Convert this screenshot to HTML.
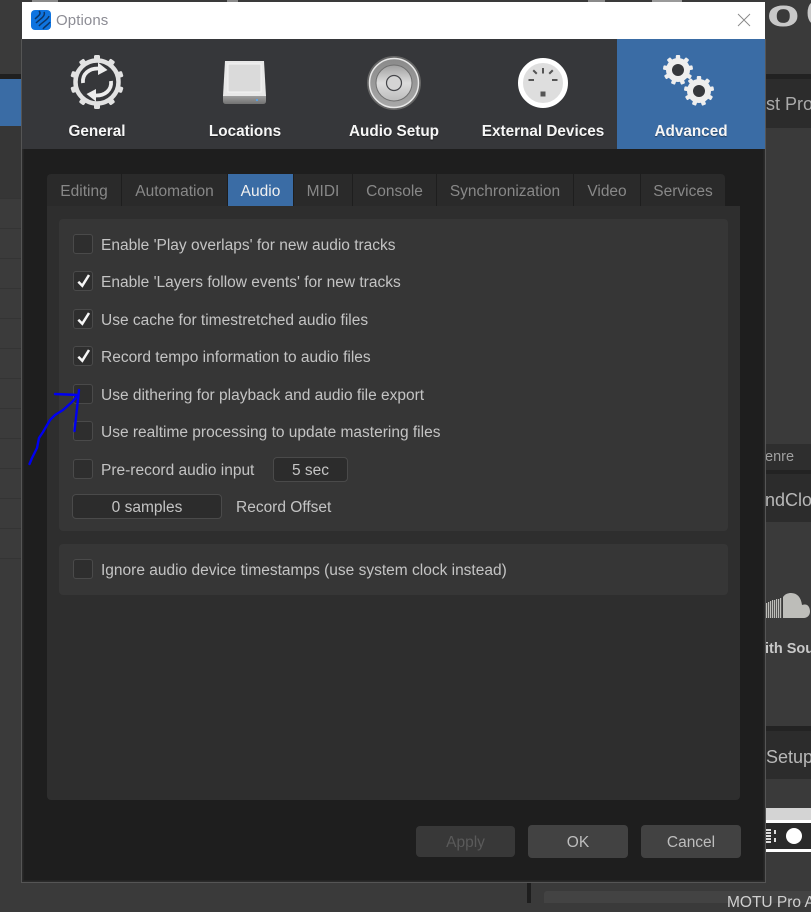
<!DOCTYPE html>
<html><head><meta charset="utf-8">
<style>
*{box-sizing:border-box}
html,body{margin:0;padding:0;width:811px;height:903px;overflow:hidden;background:#3a3a3a;font-family:"Liberation Sans",sans-serif}
.a{position:absolute}
.t{position:absolute;white-space:nowrap}
.lbl{font-size:15.5px;color:#c4c4c4;line-height:18px;margin-top:1px}
.cb{position:absolute;left:73px;width:20px;height:20px;border:1px solid #4a4a4a;border-radius:3px;background:#2e2e2e}
.tab{position:absolute;top:174px;height:32px;background:#2a2a2a;color:#888;font-size:15.5px;line-height:35px;text-align:center}
.hd{position:absolute;top:123px;font-size:15.3px;font-weight:bold;color:#f6f6f6;text-align:center;line-height:18px;width:148px;text-shadow:0 1px 1px rgba(0,0,0,.45)}
.fld{position:absolute;height:25px;background:#2c2c2c;border:1px solid #4a4a4a;border-radius:4px;color:#c4c4c4;font-size:15.5px;line-height:25px;text-align:center}
.btn{position:absolute;top:825px;height:33px;background:#424242;border-radius:4px;color:#bdbdbd;font-size:15.5px;line-height:35px;text-align:center}
</style></head><body>

<!-- background app -->
<div class="a" style="left:0;top:0;width:811px;height:74px;background:#3a3a3a"></div>
<div class="a" style="left:32px;top:0;width:26px;height:2px;background:#8a8a8a"></div>
<div class="a" style="left:227px;top:0;width:11px;height:2px;background:#8a8a8a"></div>
<div class="a" style="left:588px;top:0;width:17px;height:2px;background:#8a8a8a"></div>
<div class="a" style="left:652px;top:0;width:30px;height:2px;background:#9a9a9a"></div>
<div class="a" style="left:0;top:74px;width:22px;height:5px;background:#1f1f1f"></div>
<div class="a" style="left:0;top:79px;width:22px;height:47px;background:#3a6ca5"></div>
<div class="a" style="left:0;top:126px;width:22px;height:72px;background:#363636"></div>
<div class="a" style="left:0;top:198px;width:22px;height:361px;background:repeating-linear-gradient(#343434 0,#343434 1px,#3b3b3b 1px,#3b3b3b 30px)"></div>
<div class="a" style="left:765px;top:74px;width:46px;height:5px;background:#222"></div>
<div class="a" style="left:765px;top:79px;width:46px;height:49px;background:#2c2c2c"></div>
<div class="t" style="left:766px;top:93px;font-size:18px;color:#aaa;line-height:22px;width:45px;overflow:hidden">st Pro</div>
<div class="t" style="left:767px;top:-5px;font-size:38px;font-weight:bold;color:#c8c8c8;line-height:38px;transform:scaleX(1.4);transform-origin:0 0">o</div>
<div class="t" style="left:806px;top:-5px;font-size:38px;font-weight:bold;color:#c8c8c8;line-height:38px">C</div>
<div class="a" style="left:765px;top:444px;width:46px;height:26px;background:#2e2e2e"></div>
<div class="t" style="left:765px;top:448px;font-size:14.5px;color:#a0a0a0;line-height:18px">enre</div>
<div class="a" style="left:765px;top:470px;width:46px;height:4px;background:#232323"></div>
<div class="a" style="left:765px;top:474px;width:46px;height:48px;background:#2c2c2c"></div>
<div class="t" style="left:765px;top:489px;width:46px;overflow:hidden;font-size:18px;color:#b8b8b8;line-height:22px">ndCloud</div>
<svg class="a" style="left:765px;top:592px" width="46" height="28" viewBox="0 0 46 28">
<g fill="#bdbdb9"><rect x="1" y="11" width="1.2" height="15"/><rect x="3" y="10" width="1.2" height="16"/><rect x="5" y="9" width="1.2" height="17"/><rect x="7" y="8" width="1.2" height="18"/><rect x="9" y="8" width="1.2" height="18"/><rect x="11" y="7" width="1.2" height="19"/><rect x="13" y="7" width="1.2" height="19"/><rect x="15" y="6" width="1.2" height="20"/>
<path d="M18 26V5C20 2 23 1 26 1C32 1 36 5 37 13C38 12.500 39 12.500 40 12.500C43 12.500 45 15.500 45 19.500C45 23.500 42 26 39 26Z"/></g></svg>
<div class="t" style="left:765px;top:640px;width:46px;overflow:hidden;font-size:14.5px;font-weight:bold;color:#c8c8c8;line-height:18px">ith Sound</div>
<div class="a" style="left:765px;top:726px;width:46px;height:5px;background:#232323"></div>
<div class="a" style="left:765px;top:731px;width:46px;height:48px;background:#2c2c2c"></div>
<div class="t" style="left:766px;top:746px;width:45px;overflow:hidden;font-size:18px;color:#b8b8b8;line-height:22px">Setup</div>
<div class="a" style="left:765px;top:808px;width:46px;height:13px;background:#d4d4d4"></div>
<div class="a" style="left:765px;top:820px;width:46px;height:32px;background:#2a2a2a;border-top:3px solid #fff;border-bottom:3px solid #fff"></div>
<div class="a" style="left:786px;top:828px;width:16px;height:16px;border-radius:50%;background:#fff"></div>
<div class="a" style="left:765px;top:829px;width:6px;height:15px;background:repeating-linear-gradient(#ddd 0,#ddd 2px,#2a2a2a 2px,#2a2a2a 3px)"></div>
<div class="a" style="left:774px;top:830px;width:2px;height:4px;background:#ddd"></div>
<div class="a" style="left:774px;top:838px;width:2px;height:4px;background:#ddd"></div>
<div class="a" style="left:527px;top:882px;width:4px;height:21px;background:#1e1e1e"></div>
<div class="a" style="left:544px;top:891px;width:267px;height:12px;background:#434343;border-radius:3px 0 0 0"></div>
<div class="t" style="left:727px;top:894px;font-size:15.5px;color:#d0d0d0;line-height:18px;width:84px;overflow:hidden">MOTU Pro Audio</div>

<!-- dialog -->
<div class="a" style="left:21px;top:39px;width:745px;height:844px;background:#1e1e1e;border:1px solid #555;box-shadow:inset 0 0 0 1.500px #2a2a2a"></div>
<div class="a" style="left:22px;top:2px;width:743px;height:37px;background:#fff"></div>
<svg class="a" style="left:31px;top:10px" width="20" height="20" viewBox="0 0 20 20"><rect width="20" height="20" rx="4" fill="#0f74e0"/><path d="M8 1C11 4 7 6 4 9M13 2C15 6 9 9 5 13M18 6C17 10 11 12 8 16M19 12C17 15 14 16 12 19" stroke="#0c3566" stroke-width="1.500" fill="none"/></svg>
<div class="t" style="left:56px;top:11px;font-size:15px;color:#8c8c94;line-height:20px;letter-spacing:.1px">Options</div>
<svg class="a" style="left:737px;top:13px" width="14" height="14" viewBox="0 0 14 14"><path d="M1 1L13 13M13 1L1 13" stroke="#888" stroke-width=".9" fill="none"/></svg>

<!-- header -->
<div class="a" style="left:22px;top:39px;width:743px;height:110px;background:#36373a"></div>
<div class="a" style="left:617px;top:39px;width:148px;height:110px;background:#3a6ca5"></div>

<!-- General icon -->
<svg class="a" style="left:68px;top:54px" width="58" height="58" viewBox="0 0 58 58">
<g fill="#e2e2e2">
<circle cx="29" cy="28" r="21.500" fill="none" stroke="#e2e2e2" stroke-width="4.500"/>
<rect x="26" y="1" width="6" height="6.500" rx="1.500"/>
<rect x="26" y="1" width="6" height="6.500" rx="1.500" transform="rotate(36 29 28)"/>
<rect x="26" y="1" width="6" height="6.500" rx="1.500" transform="rotate(72 29 28)"/>
<rect x="26" y="1" width="6" height="6.500" rx="1.500" transform="rotate(108 29 28)"/>
<rect x="26" y="1" width="6" height="6.500" rx="1.500" transform="rotate(144 29 28)"/>
<rect x="26" y="1" width="6" height="6.500" rx="1.500" transform="rotate(180 29 28)"/>
<rect x="26" y="1" width="6" height="6.500" rx="1.500" transform="rotate(216 29 28)"/>
<rect x="26" y="1" width="6" height="6.500" rx="1.500" transform="rotate(252 29 28)"/>
<rect x="26" y="1" width="6" height="6.500" rx="1.500" transform="rotate(288 29 28)"/>
<rect x="26" y="1" width="6" height="6.500" rx="1.500" transform="rotate(324 29 28)"/>
</g>
<path d="M15 29C14 20 21 14 31 14.500M43 27C44 36 37 42 27 41.500" fill="none" stroke="#ececec" stroke-width="3.800"/>
<path d="M30 8.500L39.500 16L30 21ZM28 47.500L18.500 40L28 35Z" fill="#ececec"/>
</svg>

<!-- Locations icon -->
<svg class="a" style="left:222px;top:60px" width="46" height="46" viewBox="0 0 46 46">
<defs><linearGradient id="hb" x1="0" y1="0" x2="0" y2="1"><stop offset="0" stop-color="#a4a4a4"/><stop offset="1" stop-color="#727272"/></linearGradient></defs>
<path d="M1 35H44V41Q44 44 41 44H4Q1 44 1 41Z" fill="url(#hb)"/>
<path d="M3 1H42L44 36H1Z" fill="#e8e8e8"/>
<rect x="6" y="4" width="33" height="28" fill="#dadada" stroke="#f4f4f4" stroke-width="1"/>
<rect x="34" y="39" width="2" height="2" fill="#5aa0e0"/>
</svg>

<!-- Audio Setup icon -->
<svg class="a" style="left:366px;top:55px" width="56" height="56" viewBox="0 0 56 56">
<defs>
<linearGradient id="sp" x1="0" y1="0" x2="0" y2="1"><stop offset="0" stop-color="#8a8a8a"/><stop offset="1" stop-color="#a8a8a8"/></linearGradient>
<linearGradient id="sc" x1="0" y1="0" x2="0" y2="1"><stop offset="0" stop-color="#a0a0a0"/><stop offset=".5" stop-color="#dcdcdc"/><stop offset="1" stop-color="#bcbcbc"/></linearGradient>
</defs>
<circle cx="28" cy="28" r="27" fill="#666"/>
<circle cx="28" cy="28" r="24.500" fill="url(#sp)" stroke="#e8e8e8" stroke-width="1.500"/>
<circle cx="28" cy="28" r="18" fill="url(#sc)" stroke="#707070" stroke-width="1"/>
<circle cx="28" cy="28" r="7.500" fill="#d4d4d4" stroke="#45464a" stroke-width="1.200"/>
</svg>

<!-- External Devices icon -->
<svg class="a" style="left:518px;top:58px" width="50" height="50" viewBox="0 0 50 50">
<circle cx="25" cy="25" r="22.500" fill="#dedede" stroke="#fff" stroke-width="5"/>
<g fill="#555"><rect x="24" y="10" width="2" height="5.500"/><rect x="10.500" y="21" width="5.500" height="2"/><rect x="34" y="21" width="5.500" height="2"/><rect x="16" y="11.500" width="2" height="5" transform="rotate(-45 17 14)"/><rect x="32" y="11.500" width="2" height="5" transform="rotate(45 33 14)"/><rect x="22.500" y="33.500" width="5" height="5"/></g>
</svg>

<!-- Advanced icon -->
<svg class="a" style="left:660px;top:52px" width="66" height="60" viewBox="0 0 66 60">
<defs>
<g id="gr"><circle r="12" fill="#eeeeee"/>
<g fill="#eeeeee"><rect x="-2.200" y="-15" width="4.400" height="6" rx="1"/><rect x="-2.200" y="-15" width="4.400" height="6" rx="1" transform="rotate(40)"/><rect x="-2.200" y="-15" width="4.400" height="6" rx="1" transform="rotate(80)"/><rect x="-2.200" y="-15" width="4.400" height="6" rx="1" transform="rotate(120)"/><rect x="-2.200" y="-15" width="4.400" height="6" rx="1" transform="rotate(160)"/><rect x="-2.200" y="-15" width="4.400" height="6" rx="1" transform="rotate(200)"/><rect x="-2.200" y="-15" width="4.400" height="6" rx="1" transform="rotate(240)"/><rect x="-2.200" y="-15" width="4.400" height="6" rx="1" transform="rotate(280)"/><rect x="-2.200" y="-15" width="4.400" height="6" rx="1" transform="rotate(320)"/></g>
<circle r="6" fill="#36383c"/></g>
</defs>
<use href="#gr" x="18" y="18"/>
<use href="#gr" x="39" y="39"/>
</svg>

<div class="hd" style="left:23px">General</div>
<div class="hd" style="left:171px">Locations</div>
<div class="hd" style="left:320px">Audio Setup</div>
<div class="hd" style="left:469px">External Devices</div>
<div class="hd" style="left:617px">Advanced</div>

<!-- tabs -->
<div class="tab" style="left:47px;width:74px;border-radius:4px 0 0 0">Editing</div>
<div class="tab" style="left:122px;width:105px">Automation</div>
<div class="tab" style="left:228px;width:65px;background:#3a6ca5;color:#f0f0f0">Audio</div>
<div class="tab" style="left:294px;width:58px">MIDI</div>
<div class="tab" style="left:353px;width:83px">Console</div>
<div class="tab" style="left:437px;width:136px">Synchronization</div>
<div class="tab" style="left:574px;width:66px">Video</div>
<div class="tab" style="left:641px;width:84px;border-radius:0 4px 0 0">Services</div>

<!-- panel -->
<div class="a" style="left:47px;top:206px;width:693px;height:594px;background:#2e2e2e;border-radius:0 0 4px 4px"></div>
<div class="a" style="left:59px;top:219px;width:669px;height:312px;background:#363636;border-radius:4px"></div>
<div class="a" style="left:59px;top:544px;width:669px;height:51px;background:#363636;border-radius:4px"></div>

<div class="cb" style="top:234px"></div><div class="t lbl" style="left:101px;top:236px">Enable 'Play overlaps' for new audio tracks</div>
<div class="cb" style="top:271px"></div><div class="t lbl" style="left:101px;top:273px">Enable 'Layers follow events' for new tracks</div>
<div class="cb" style="top:309px"></div><div class="t lbl" style="left:101px;top:311px">Use cache for timestretched audio files</div>
<div class="cb" style="top:346px"></div><div class="t lbl" style="left:101px;top:348px">Record tempo information to audio files</div>
<div class="cb" style="top:384px"></div><div class="t lbl" style="left:101px;top:386px">Use dithering for playback and audio file export</div>
<div class="cb" style="top:421px"></div><div class="t lbl" style="left:101px;top:423px">Use realtime processing to update mastering files</div>
<div class="cb" style="top:459px"></div><div class="t lbl" style="left:101px;top:461px">Pre-record audio input</div>
<div class="fld" style="left:273px;top:457px;width:75px">5 sec</div>
<div class="fld" style="left:72px;top:494px;width:150px">0 samples</div>
<div class="t lbl" style="left:236px;top:498px">Record Offset</div>
<div class="cb" style="top:559px"></div><div class="t lbl" style="left:101px;top:561px">Ignore audio device timestamps (use system clock instead)</div>

<svg class="a" style="left:73px;top:271px" width="20" height="95" viewBox="0 0 20 95">
<g fill="none" stroke="#f6f6f6" stroke-width="2.500"><path d="M5.300 10.700L9.300 14.700L16 4"/><path d="M5.300 48.700L9.300 52.700L16 42"/><path d="M5.300 85.700L9.300 89.700L16 79"/></g>
</svg>

<!-- buttons -->
<div class="btn" style="left:416px;top:826px;width:99px;height:31px;background:#383838;color:#5a5a5a;line-height:33px">Apply</div>
<div class="btn" style="left:528px;width:100px">OK</div>
<div class="btn" style="left:641px;width:100px">Cancel</div>

<!-- blue arrow annotation -->
<svg class="a" style="left:0;top:360px" width="100" height="110" viewBox="0 0 100 110">
<g fill="none" stroke="#0000f0" stroke-width="2.400" stroke-linecap="round" stroke-linejoin="round">
<path d="M29.500 104L32 98L37 88L39 78L43 72L50 60L55 55L63 50L72 42L78 35"/>
<path d="M55 34L78 35"/>
<path d="M79 30L74.500 71"/>
</g></svg>
</body></html>
